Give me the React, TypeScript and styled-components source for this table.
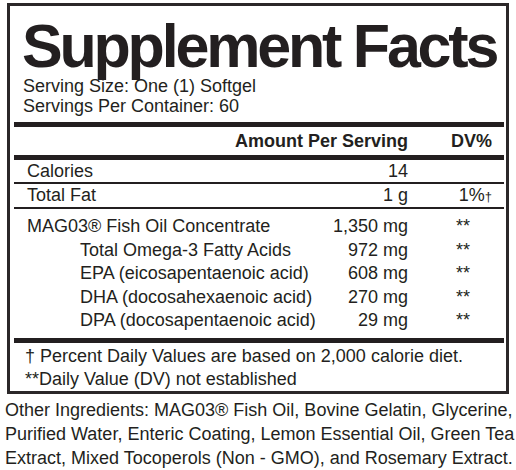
import React from "react";
import styled, { createGlobalStyle } from "styled-components";

const Global = createGlobalStyle`
  html, body { margin: 0; padding: 0; background: #fff; }
  body { font-family: "Liberation Sans", Arial, sans-serif; color: #231f20; }
`;

const Page = styled.div`
  width: 516px;
  height: 470px;
  overflow: hidden;
  padding-top: 3px;
  box-sizing: border-box;
`;

const Label = styled.section`
  margin: 0 7px;
  border: 3px solid #2b2829;
  padding: 0 2px 0 4px;
`;

const Title = styled.h1`
  margin: 0;
  padding: 12px 0 0 8px;
  font-size: 61px;
  line-height: 56px;
  font-weight: 700;
  letter-spacing: -3.2px;
  white-space: nowrap;
`;

const InfoLine = styled.div`
  padding-left: 9px;
  font-size: 18px;
  line-height: 20px;
`;

const Info = styled.div`
  padding: 2px 0 6px;
`;

const Rule = styled.div<{ $thick?: boolean }>`
  height: ${(p) => (p.$thick ? "5px" : "2px")};
  background: #231f20;
`;

const Row = styled.div<{ $h?: number; $indent?: boolean }>`
  display: grid;
  grid-template-columns: minmax(0, 1fr) auto 96px;
  align-items: center;
  height: ${(p) => p.$h ?? 23}px;
  font-size: 18px;
  padding-left: ${(p) => (p.$indent ? 66 : 13)}px;
`;

const HeaderRow = styled(Row)`
  font-weight: 700;
`;

const Amount = styled.div`
  text-align: right;
  white-space: nowrap;
`;

const Dv = styled.div<{ $stars?: boolean }>`
  text-align: ${(p) => (p.$stars ? "left" : "right")};
  padding: ${(p) => (p.$stars ? "0 0 0 48px" : "0 12px 0 0")};
  white-space: nowrap;
`;

const Dagger = styled.span`
  font-size: 13px;
`;

const Name = styled.div`
  white-space: nowrap;
`;

const Ingredients = styled.div`
  padding: 6px 0 5px;
`;

const Footnotes = styled.div`
  padding: 2px 0 0 11px;
  font-size: 18px;
  line-height: 23px;
`;

const Other = styled.p`
  margin: 4px 0 0 5px;
  width: 511px;
  font-size: 18px;
  line-height: 24px;
`;

const items = [
  { name: "MAG03® Fish Oil Concentrate", amt: "1,350 mg", indent: false },
  { name: "Total Omega-3 Fatty Acids", amt: "972 mg", indent: true },
  { name: "EPA (eicosapentaenoic acid)", amt: "608 mg", indent: true },
  { name: "DHA (docosahexaenoic acid)", amt: "270 mg", indent: true },
  { name: "DPA (docosapentaenoic acid)", amt: "29 mg", indent: true },
];

export default function App() {
  return (
    <Page>
      <Global />
      <Label>
        <Title>Supplement Facts</Title>
        <Info>
          <InfoLine>Serving Size: One (1) Softgel</InfoLine>
          <InfoLine>Servings Per Container: 60</InfoLine>
        </Info>
        <Rule $thick />
        <HeaderRow $h={28}>
          <Name />
          <Amount>Amount Per Serving</Amount>
          <Dv>DV%</Dv>
        </HeaderRow>
        <Rule $thick />
        <Row $h={22}>
          <Name>Calories</Name>
          <Amount>14</Amount>
          <Dv />
        </Row>
        <Rule />
        <Row $h={23}>
          <Name>Total Fat</Name>
          <Amount>1 g</Amount>
          <Dv>
            1%<Dagger>†</Dagger>
          </Dv>
        </Row>
        <Rule />
        <Ingredients>
          {items.map((it) => (
            <Row key={it.name} $indent={it.indent} $h={23.5}>
              <Name>{it.name}</Name>
              <Amount>{it.amt}</Amount>
              <Dv $stars>**</Dv>
            </Row>
          ))}
        </Ingredients>
        <Rule $thick />
        <Footnotes>
          <div>† Percent Daily Values are based on 2,000 calorie diet.</div>
          <div>**Daily Value (DV) not established</div>
        </Footnotes>
      </Label>
      <Other>
        Other Ingredients: MAG03® Fish Oil, Bovine Gelatin, Glycerine, Purified
        Water, Enteric Coating, Lemon Essential Oil, Green Tea Extract, Mixed
        Tocoperols (Non - GMO), and Rosemary Extract.
      </Other>
    </Page>
  );
}
